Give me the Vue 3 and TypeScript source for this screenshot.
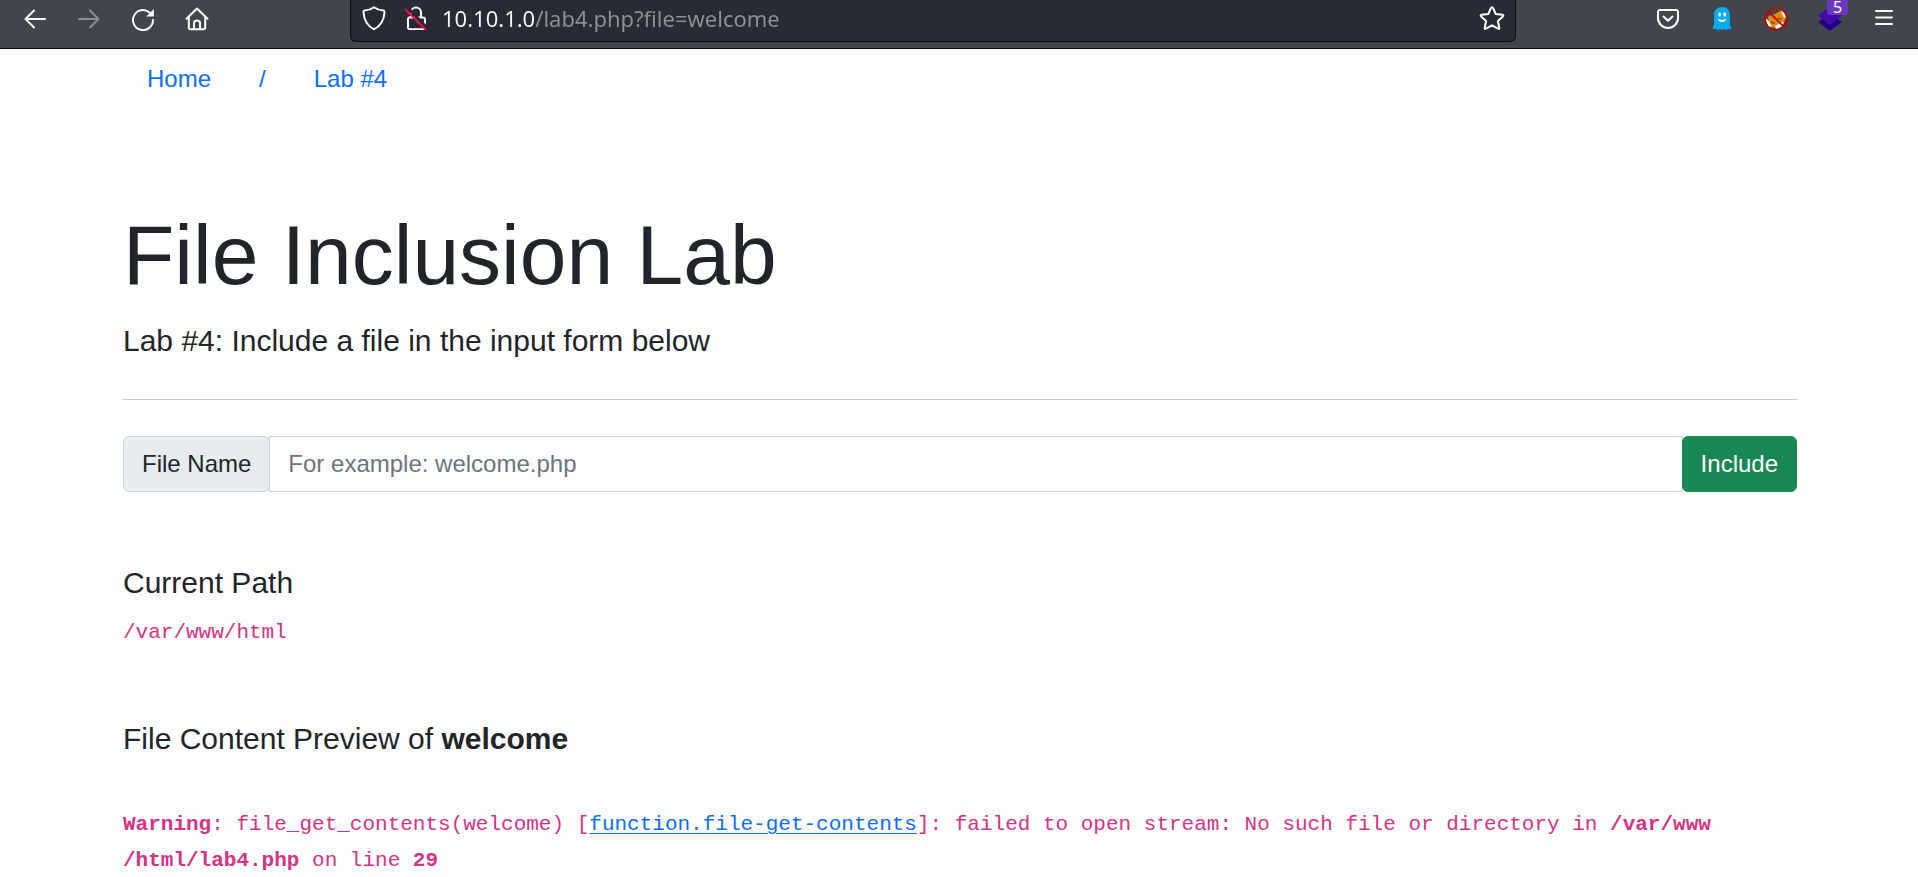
<script setup lang="ts">
import { ref } from 'vue'

const address = ref('10.10.1.0/lab4.php?file=welcome')
const fileName = ref('')
const currentPath = '/var/www/html'
const preview = 'welcome'
</script>

<template>
  <header class="toolbar">
    <div class="group">
      <button class="tool" type="button" aria-label="Back">
        <svg width="24" height="24" viewBox="0 0 24 24"><path d="M22 12H3M11 3.500L2.500 12l8.500 8.500" /></svg>
      </button>
      <button class="tool dim" type="button" aria-label="Forward">
        <svg width="24" height="24" viewBox="0 0 24 24"><path d="M2 12h19M13 3.500L21.500 12 13 20.500" /></svg>
      </button>
      <button class="tool" type="button" aria-label="Reload">
        <svg width="24" height="24" viewBox="0 0 24 24"><path d="M22 13A10 10 0 1 1 18.500 5.500" /><path class="solid" d="M22.800 2v7.500h-7.500z" /></svg>
      </button>
      <button class="tool" type="button" aria-label="Home">
        <svg width="24" height="24" viewBox="0 0 24 24"><path d="M1.500 11.800L12 1.500l10.500 10.300M3.800 10v10.500q0 1.800 1.800 1.800h12.800q1.800 0 1.800-1.800V10M9 22v-6q0-2.500 3-2.500t3 2.500v6" /></svg>
      </button>
    </div>

    <div class="address">
      <svg width="24" height="24" viewBox="0 0 24 24"><path d="M12 1.200C9 3.500 5.500 4.200 2.500 4.500c-1 0-1 .8-1 2C2 14 5.500 20 12 23.300 18.500 20 22 14 22.500 6.500c0-1.200 0-2-1-2C18.500 4.200 15 3.500 12 1.200z" /></svg>
      <svg class="lock" width="24" height="24" viewBox="0 0 24 24"><path d="M7 10V6.500a5 5 0 0 1 10 0V10M5 11.500h14q2 0 2 2v7.800q0 2-2 2H6q-2 0-2-2v-7.800q0-2 2-2" /><path class="gap" d="M4 2l20 21" /><path class="strike" d="M1.500 3.500L22 24" /></svg>
      <input v-model="address" class="url" type="text" aria-label="Address" spellcheck="false" />
      <button class="star" type="button" aria-label="Bookmark this page">
        <svg width="26" height="26" viewBox="0 0 26 26"><path d="M13 2.200q.8 0 1.100.9L16.700 9l6.700.8q1.700.3.500 1.600l-5 4.600 1.400 6.800q.2 1.600-1.300.9L13 20.300l-6 3.400q-1.500.7-1.300-.9L7.100 16l-5-4.600Q.9 10.100 2.600 9.800L9.300 9l2.600-5.900q.3-.9 1.100-.9z" /></svg>
      </button>
    </div>

    <div class="group">
      <button class="tool" type="button" aria-label="Save to Pocket">
        <svg width="24" height="24" viewBox="0 0 24 24"><path d="M4 3h16q2 0 2 2v6a10 10 0 0 1-20 0V5q0-2 2-2zM7.500 9.500l4.500 4.300 4.500-4.300" /></svg>
      </button>
      <button class="tool" type="button" aria-label="Ghostery">
        <svg width="24" height="24" viewBox="0 0 24 24">
          <path fill="#00aef0" stroke="none" d="M12 0C7 0 4 3.500 4 8v8.500c0 2.500-1.500 4-1.500 5.800 1.500.2 2.200-.5 3-.5.9 0 1.300 1.200 2.600 1.200 1 0 1.300-1 2.100-1s.9 1 1.900 1 1.100-1 2-1c.8 0 1 1 2.200 1 1 0 1.300-1.200 2.100-1.200.9 0 1.500.8 3 .5 0-1.800-1.500-3.300-1.500-5.800V8C19.900 3.500 17 0 12 0z" />
          <ellipse cx="9.600" cy="7.500" rx="1.300" ry="2.300" fill="#fff" stroke="none" /><ellipse cx="14.600" cy="7.500" rx="1.300" ry="2.300" fill="#fff" stroke="none" />
          <path fill="#fff" stroke="none" d="M7.800 11.800q4.300 2 8.600 0-.8 3.200-4.300 3.200t-4.300-3.200z" />
        </svg>
      </button>
      <button class="tool" type="button" aria-label="FoxyProxy disabled">
        <svg width="24" height="24" viewBox="0 0 24 24">
          <path fill="#e58712" stroke="none" d="M4 10q3-3 7-3l7-4 3 8q0 7-6 9-6 2-9-1z" />
          <path fill="#fff" stroke="none" d="M1 11l4 3 3 6-4-1zM17 4l4 2 1 6-3-3zM11 19l5-3 4-1-3 5-5 2z" />
          <path stroke="#8b4a0a" stroke-width="1.500" d="M7 15l3 1M14 11l3 1" />
          <circle cx="12" cy="12" r="11" stroke="#c00000" stroke-width="1.600" /><path stroke="#c00000" stroke-width="1.600" d="M4.200 4.200l15.600 15.600" />
        </svg>
      </button>
      <button class="tool" type="button" aria-label="Wappalyzer, 5 technologies">
        <svg width="24" height="24" viewBox="0 0 24 24"><path fill="#1f0082" stroke="none" d="M0 15l6-4 6 3 6-3 6 4-12 9z" /><path fill="#4608ad" stroke="none" d="M12 0l12 8.500L12 18 0 8.500z" /></svg>
        <span class="badge">5</span>
      </button>
      <button class="tool" type="button" aria-label="Menu">
        <svg width="24" height="24" viewBox="0 0 24 24"><path d="M4 4h16M4 10.500h16M4 17h16" /></svg>
      </button>
    </div>
  </header>

  <main class="page">
    <nav class="crumbs" aria-label="Breadcrumb">
      <a href="#">Home</a>
      <a href="#">/</a>
      <a href="#">Lab #4</a>
    </nav>

    <h1>File Inclusion Lab</h1>
    <p class="lead">Lab #4: Include a file in the input form below</p>
    <hr />

    <form class="include" @submit.prevent>
      <label for="file">File Name</label>
      <input id="file" v-model="fileName" type="text" placeholder="For example: welcome.php" />
      <button type="submit">Include</button>
    </form>

    <h2>Current Path</h2>
    <code>{{ currentPath }}</code>

    <h2 class="preview">File Content Preview of <b>{{ preview }}</b></h2>
    <code class="warning"><b>Warning</b>: file_get_contents({{ preview }}) [<a href="#">function.file-get-contents</a>]: failed to open stream: No such file or directory in <b>/var/www<wbr />/html/lab4.php</b> on line <b>29</b></code>
  </main>
</template>

<style>
body {
  margin: 0;
  background: #fff;
}
</style>

<style scoped>
.toolbar {
  display: flex;
  align-items: flex-start;
  box-sizing: border-box;
  height: 49px;
  padding: 0 7px 0 8px;
  background: #43454d;
  border-bottom: 1px solid #0c0c0d;
}
.toolbar svg {
  flex: none;
  fill: none;
  stroke: #fbfbfe;
  stroke-width: 2;
  stroke-linecap: round;
  stroke-linejoin: round;
}
.group {
  display: flex;
}
.tool,
.star {
  position: relative;
  display: flex;
  align-items: center;
  justify-content: center;
  width: 54px;
  height: 38px;
  padding: 0;
  border: 0;
  background: none;
}
.toolbar .solid {
  fill: #fbfbfe;
  stroke: none;
}
.toolbar .dim svg {
  stroke: #8c8d92;
}
.address {
  display: flex;
  align-items: center;
  flex: 1;
  box-sizing: border-box;
  height: 42px;
  margin: 0 125px 0 126px;
  padding: 0 10px 5px 11px;
  background: #282a36;
  border: 1px solid #0c0c0d;
  border-top: 0;
  border-radius: 0 0 6px 6px;
}
.address .lock {
  margin-left: 18px;
}
.lock .gap {
  stroke: #282a36;
  stroke-width: 3;
}
.lock .strike {
  stroke: #f5093c;
}
.url {
  flex: 1;
  min-width: 0;
  height: 36px;
  margin-left: 14px;
  padding: 0;
  border: 0;
  outline: 0;
  font: 22px "Noto Sans", sans-serif;
  color: transparent;
  background: linear-gradient(to right, #fbfbfe 92px, #8f9096 92px);
  -webkit-background-clip: text;
  background-clip: text;
}
.star {
  width: 26px;
}
.badge {
  position: absolute;
  top: 0;
  right: 9px;
  box-sizing: border-box;
  width: 21px;
  border-radius: 0 0 3px 3px;
  background: #6b37bd;
  color: #fff;
  text-align: center;
  font: 16px/15px "Noto Sans", sans-serif;
}

.page {
  padding: 0 121px 0 123px;
  color: #212529;
  font-family: "Liberation Sans", Arial, sans-serif;
  font-size: 24px;
  line-height: 36px;
}
a {
  color: #0d6efd;
}
.crumbs {
  display: flex;
}
.crumbs a {
  padding: 12px 24px;
  text-decoration: none;
}
h1 {
  margin: 96px 0 12px;
  font-size: 84px;
  font-weight: 400;
  line-height: 101px;
}
.lead {
  margin: 0;
  font-size: 30px;
  line-height: 45px;
}
hr {
  height: 1px;
  margin: 36px 0;
  border: 0;
  background: #c8c9ca;
}
.include {
  display: flex;
  margin-bottom: 73px;
}
.include label,
.include input,
.include button {
  box-sizing: border-box;
  height: 56px;
  padding: 9px 18px;
  border: 1px solid #ced4da;
  font: 24px/36px "Liberation Sans", Arial, sans-serif;
}
.include label {
  border-radius: 6px;
  background: #e9ecef;
}
.include input {
  flex: 1;
  min-width: 0;
  margin: 0 -1px;
  background: #fff;
  color: #212529;
}
.include input::placeholder {
  color: #6c757d;
  opacity: 1;
}
.include button {
  position: relative;
  border-color: #198754;
  border-radius: 6px;
  background: #198754;
  color: #fff;
}
h2 {
  margin: 0 0 14px;
  font-size: 30px;
  font-weight: 400;
  line-height: 36px;
}
code {
  display: block;
  color: #d63384;
  font: 21px/36px "Liberation Mono", "Courier New", monospace;
}
.warning a {
  text-decoration-thickness: 1px;
  text-underline-offset: 3px;
}
.preview {
  margin: 70px 0 50px;
}
</style>
